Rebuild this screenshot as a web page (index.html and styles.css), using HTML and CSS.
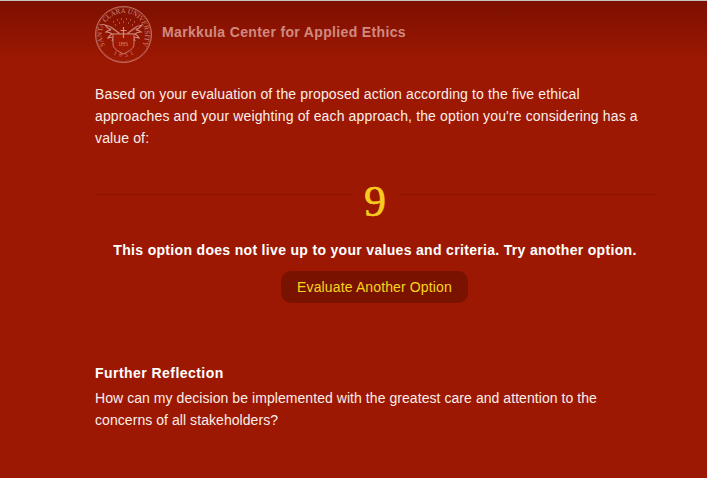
FILE: index.html
```html
<!DOCTYPE html>
<html lang="en">
<head>
    <meta charset="UTF-8">
    <meta name="viewport" content="width=device-width, initial-scale=1.0">
    <title>Markkula Center for Applied Ethics</title>
    <link rel="stylesheet" href="styles.css">
</head>
<body>
    <div class="page">
        <!-- Encabezado con el sello -->
        <header class="header">
            <svg class="seal" viewBox="0 0 57 57" aria-hidden="true">
                <defs>
                    <path id="sealTop" d="M13.3 43.7 A21.5 21.5 0 1 1 43.7 43.7"/>
                    <path id="sealBottom" d="M10 41 A22.5 22.5 0 0 0 47 41"/>
                </defs>
                <circle cx="28.5" cy="28.5" r="28" fill="none" stroke="currentColor" stroke-width="0.8"/>
                <circle cx="28.5" cy="28.5" r="27" fill="none" stroke="currentColor" stroke-width="0.3"/>
                <text class="seal-text"><textPath href="#sealTop" startOffset="50%" text-anchor="middle">SANTA CLARA UNIVERSITY</textPath></text>
                <text class="seal-year"><textPath href="#sealBottom" startOffset="50%" text-anchor="middle">1  8  5  1</textPath></text>
                <!-- alas -->
                <path d="M26 31 C22 24 16 20 10 19 C12 22 14 23 16 24 C13 24 12 25 11 26 C14 26 16 27 17 28 C15 29 14 30 13 32 C16 31 18 31 19 32 C18 33 17 34 17 35" fill="none" stroke="currentColor" stroke-width="1.2"/>
                <path d="M31 31 C35 24 41 20 47 19 C45 22 43 23 41 24 C44 24 45 25 46 26 C43 26 41 27 40 28 C42 29 43 30 44 32 C41 31 39 31 38 32 C39 33 40 34 40 35" fill="none" stroke="currentColor" stroke-width="1.2"/>
                <path d="M17 28 L40 28 M15 22 L25 27 M42 22 L32 27" fill="none" stroke="currentColor" stroke-width="0.6"/>
                <!-- escudo -->
                <path d="M18 28 H39 V38 C39 43 34 45 28.5 48 C23 45 18 43 18 38 Z" fill="#9c1802" stroke="currentColor" stroke-width="0.9"/>
                <path d="M28.5 21 V32 M25.5 24.5 H31.5" fill="none" stroke="currentColor" stroke-width="1.2"/>
                <text class="seal-ihs" x="28.5" y="39.5" text-anchor="middle">IHS</text>
                <!-- estrellas -->
                <path d="M18 16 h1 M22 14 h1 M26 13 h1 M31 13 h1 M35 14 h1 M39 16 h1 M20 19 h1 M24 17 h1 M28 16 h1 M33 17 h1 M37 19 h1" stroke="currentColor" stroke-width="1"/>
            </svg>
            <span class="header-title">Markkula Center for Applied Ethics</span>
        </header>

        <p class="intro">Based on your evaluation of the proposed action according to the five ethical approaches and your weighting of each approach, the option you're considering has a value of:</p>

        <div class="score">
            <span class="score-line"></span>
            <span class="score-value">9</span>
            <span class="score-line"></span>
        </div>

        <p class="verdict">This option does not live up to your values and criteria. Try another option.</p>

        <div class="actions">
            <button class="btn-evaluate">Evaluate Another Option</button>
        </div>

        <h2 class="reflection-title">Further Reflection</h2>
        <p class="reflection-text">How can my decision be implemented with the greatest care and attention to the concerns of all stakeholders?</p>
    </div>
</body>
</html>
```

FILE: styles.css
```css
html, body {
    height: 100%;
}
body {
    font-family: "Liberation Sans", Arial, sans-serif;
    font-size: 14px;
    line-height: 22.4px;
    color: #fbeeea;
    background-color: #9c1802;
    background-image: linear-gradient(to bottom, #7c0f00 0, #9c1802 60px);
    background-repeat: no-repeat;
    border-top: 1px solid #c9c4c0;
    box-sizing: border-box;
    margin: 0;
}
.page {
    width: 560px;
    margin-left: 95px;
}
.header {
    display: flex;
    align-items: flex-start;
    gap: 10px;
    padding-top: 5px;
    color: #d08a80;
}
.seal {
    width: 57px;
    height: 57px;
    flex: none;
}
.seal-text {
    font-family: "Liberation Serif", serif;
    font-size: 6.9px;
    fill: currentColor;
}
.seal-year {
    font-family: "Liberation Serif", serif;
    font-size: 6px;
    white-space: pre;
    fill: currentColor;
}
.seal-ihs {
    font-family: "Liberation Serif", serif;
    font-size: 6px;
    fill: currentColor;
}
.header-title {
    margin-top: 15px;
    font-weight: bold;
    letter-spacing: 0.35px;
}
.intro {
    margin: 19.5px 0 0;
    width: 550px;
    letter-spacing: 0.14px;
}
.score {
    display: flex;
    align-items: center;
    margin-top: 19.5px;
    height: 50px;
}
.score-line {
    flex: 1;
    height: 1px;
    background-color: #8a1300;
}
.score-value {
    width: 46px;
    padding-top: 16px;
    text-align: center;
    font-family: "Liberation Serif", serif;
    font-size: 44px;
    line-height: 50px;
    color: #f7cb1f;
    -webkit-text-stroke: 0.6px #f7cb1f;
}
.verdict {
    margin: 20px 0 0;
    text-align: center;
    font-weight: bold;
    letter-spacing: 0.32px;
    color: #fff;
}
.actions {
    display: flex;
    justify-content: center;
    margin-top: 9px;
    padding-right: 1px;
}
.btn-evaluate {
    width: 187px;
    height: 32px;
    padding: 0;
    border: none;
    border-radius: 10px;
    background-color: #7a1200;
    color: #f7d51d;
    font-family: inherit;
    font-size: 14px;
    letter-spacing: 0.13px;
    cursor: pointer;
}
.reflection-title {
    margin: 59px 0 0;
    font-size: 14px;
    line-height: 22px;
    letter-spacing: 0.45px;
    color: #fff;
}
.reflection-text {
    margin: 3px 0 0;
    width: 550px;
    letter-spacing: 0.06px;
}
```
